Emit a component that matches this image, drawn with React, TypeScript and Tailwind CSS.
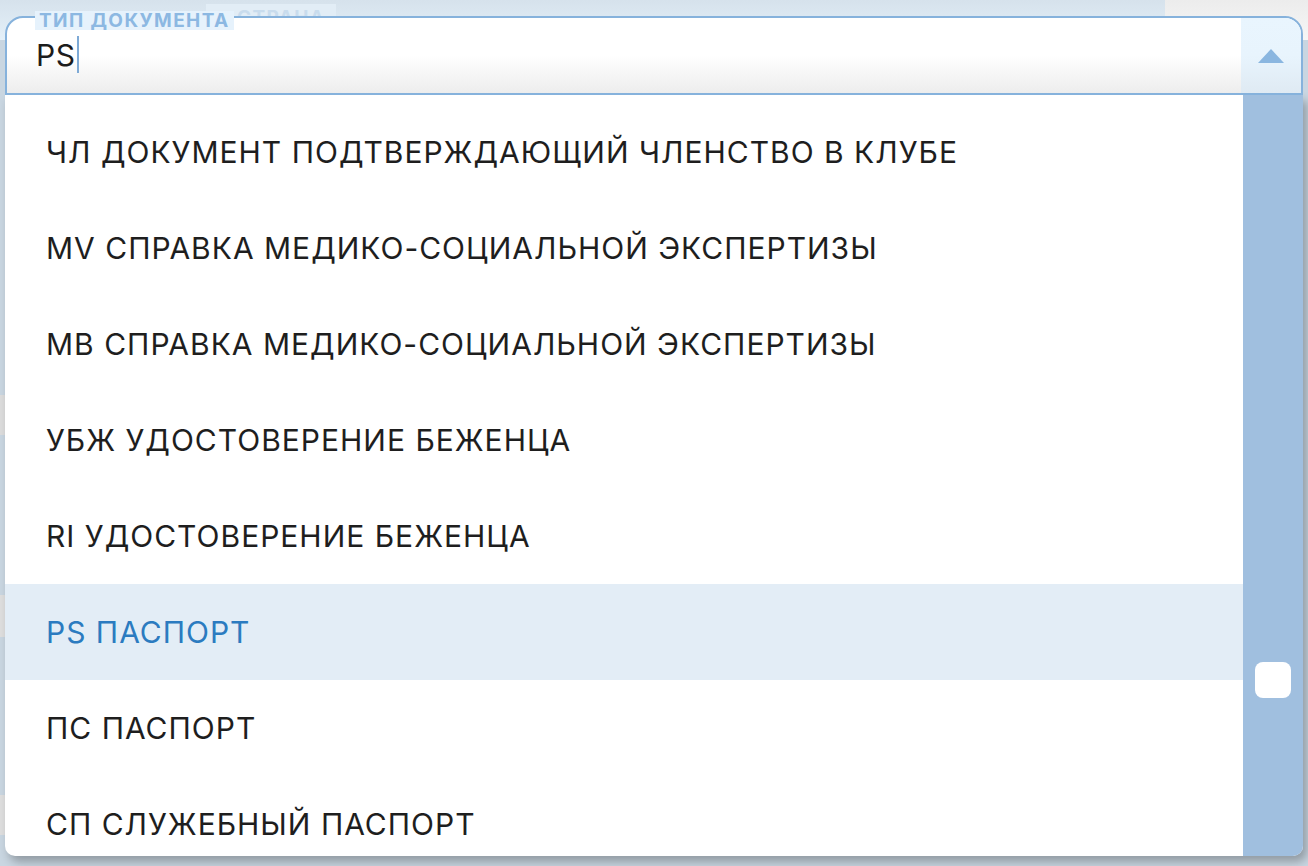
import React from "react";

const items = [
  "ЧЛ ДОКУМЕНТ ПОДТВЕРЖДАЮЩИЙ ЧЛЕНСТВО В КЛУБЕ",
  "MV СПРАВКА МЕДИКО-СОЦИАЛЬНОЙ ЭКСПЕРТИЗЫ",
  "МВ СПРАВКА МЕДИКО-СОЦИАЛЬНОЙ ЭКСПЕРТИЗЫ",
  "УБЖ УДОСТОВЕРЕНИЕ БЕЖЕНЦА",
  "RI УДОСТОВЕРЕНИЕ БЕЖЕНЦА",
  "PS ПАСПОРТ",
  "ПС ПАСПОРТ",
  "СП СЛУЖЕБНЫЙ ПАСПОРТ",
];

export default function App() {
  return (
    <div className="relative w-[1308px] h-[866px] overflow-hidden bg-[#c9d6e1] font-['Inter',sans-serif]">
      {/* blurred page behind */}
      <div className="absolute inset-x-0 top-0 h-[40px] bg-gradient-to-b from-[#d6e2ec] to-[#e4f0f9]" />
      <div className="absolute right-0 top-0 w-[143px] h-[40px] bg-gradient-to-b from-[#ececec] to-[#f6f6f6]" />
      <div className="absolute left-[206px] top-[4px] w-[130px] h-[14px] bg-[#e2edf6]" />
      <div className="absolute left-[237px] top-[8px] h-[8px] overflow-hidden">
        <div className="text-[19px] leading-[20px] font-bold tracking-[1.4px] text-[#c9dced]">СТРАНА</div>
      </div>
      <div className="absolute left-0 top-[395px] w-[5px] h-[40px] bg-[#dcdcdc]" />
      <div className="absolute left-0 top-[595px] w-[5px] h-[42px] bg-[#dedede]" />
      <div className="absolute left-0 top-[795px] w-[5px] h-[40px] bg-[#dedede]" />

      {/* combobox */}
      <div className="absolute left-[5px] top-[16px] w-[1298px] flex flex-col">
        <div className="relative h-[79px] flex rounded-t-[18px] border-2 border-[#86b2dc] bg-gradient-to-b from-white via-white to-[#ededed] overflow-hidden">
          <div className="flex-1 flex items-center pl-[29px] pb-[2px]">
            <span className="text-[30px] leading-[36px] text-[#1c1c1c] tracking-[0.5px]">PS</span>
            <span className="ml-[2px] w-[2px] h-[37px] bg-[#7eaad6]" />
          </div>
          <div className="w-[60px] flex items-center justify-center bg-gradient-to-b from-[#e9f5fe] via-[#e8f4fd] to-[#dfeaf3]">
            <svg width="26" height="14" viewBox="0 0 26 14">
              <polygon points="13,0 26,14 0,14" fill="#8ab6e0" />
            </svg>
          </div>
        </div>
        <div className="flex h-[761px] rounded-b-[10px] overflow-hidden bg-white shadow-[4px_6px_10px_rgba(0,0,0,0.28)]">
          <div className="flex-1 pt-[9px] overflow-hidden">
            {items.map((t) => {
              const active = t === "PS ПАСПОРТ";
              return (
                <div
                  key={t}
                  className={
                    active
                      ? "h-[96px] shrink-0 flex items-center pl-[41px] bg-[#e3edf6] text-[#2b7bc0] text-[30px] tracking-[1px]"
                      : "h-[96px] shrink-0 flex items-center pl-[41px] text-[#1e1e1e] text-[30px] tracking-[1px]"
                  }
                >
                  {t}
                </div>
              );
            })}
          </div>
          <div className="w-[60px] bg-[#a0bfdf] flex flex-col pl-[12px] pt-[567px]">
            <div className="w-[36px] h-[36px] rounded-[8px] bg-white" />
          </div>
        </div>
      </div>

      {/* floating label */}
      <div className="absolute left-[35px] top-[11px] px-[4px] h-[19px] flex items-center bg-[#e6f2fc]">
        <span className="text-[19px] leading-[19px] font-bold tracking-[1.4px] text-[#8cb8e2]">ТИП ДОКУМЕНТА</span>
      </div>
    </div>
  );
}
